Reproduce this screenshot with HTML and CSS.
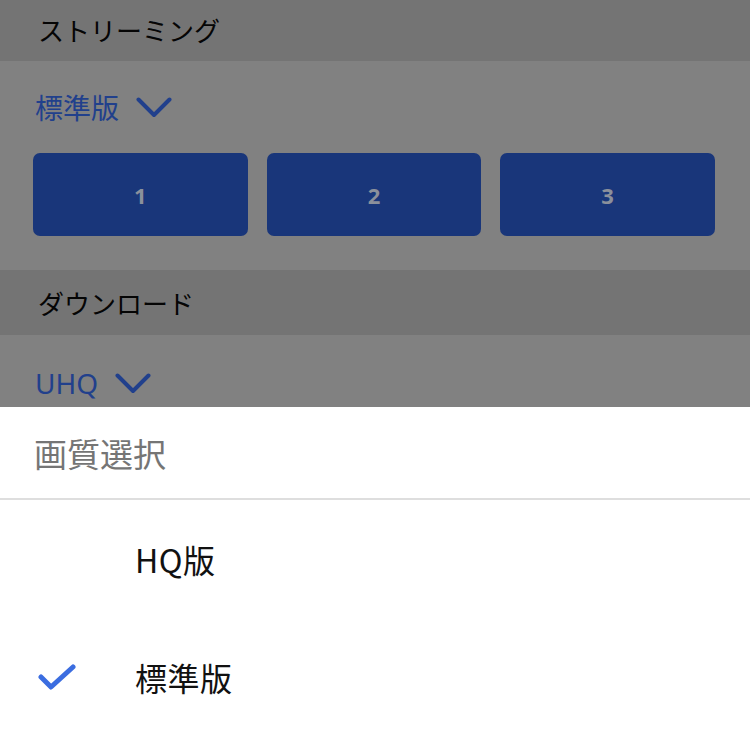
FILE: index.html
```html
<!DOCTYPE html>
<html lang="ja">
<head>
<meta charset="utf-8">
<link rel="stylesheet" href="styles.css">
</head>
<body>
<div class="page">
  <div class="section-head first">ストリーミング</div>
  <div class="section-body">
    <div class="select">
      <span class="select-label">標準版</span>
      <svg class="chevron" width="36" height="22" viewBox="0 0 36 22"><polyline points="2.5,2.5 18,18 33.5,2.5" fill="none" stroke="currentColor" stroke-width="4" stroke-linecap="round" stroke-linejoin="round"/></svg>
    </div>
    <div class="buttons">
      <div class="num-btn">1</div>
      <div class="num-btn">2</div>
      <div class="num-btn">3</div>
    </div>
  </div>
  <div class="section-head second">ダウンロード</div>
  <div class="section-body last">
    <div class="select">
      <span class="select-label latin">UHQ</span>
      <svg class="chevron" width="36" height="22" viewBox="0 0 36 22"><polyline points="2.5,2.5 18,18 33.5,2.5" fill="none" stroke="currentColor" stroke-width="4" stroke-linecap="round" stroke-linejoin="round"/></svg>
    </div>
  </div>
</div>
<div class="sheet">
  <div class="sheet-title">画質選択</div>
  <div class="option">
    <span class="check-col"></span>
    <span class="option-label">HQ版</span>
  </div>
  <div class="option">
    <span class="check-col">
      <svg width="40" height="30" viewBox="0 0 40 30"><polyline points="3,15 13,25 35,5" fill="none" stroke="#3b6de0" stroke-width="5" stroke-linecap="round" stroke-linejoin="round"/></svg>
    </span>
    <span class="option-label">標準版</span>
  </div>
</div>
</body>
</html>
```
FILE: styles.css
```css
* { box-sizing: border-box; }
html, body { margin: 0; padding: 0; }
body {
  width: 750px;
  height: 734px;
  overflow: hidden;
  background: #818181;
  font-family: "Noto Sans CJK JP", "Noto Sans", sans-serif;
}
.page { display: flex; flex-direction: column; }
.section-head {
  background: #747474;
  color: #050505;
  font-size: 26px;
  padding-left: 38px;
  display: flex;
  align-items: center;
}
.section-head.first { height: 61px; padding-bottom: 3px; }
.section-head.second { height: 65px; }
.section-body {
  background: #818181;
  padding: 22px 35px 34px 33px;
  display: flex;
  flex-direction: column;
  gap: 22px;
}
.section-body.last { padding-top: 24px; }
.select {
  height: 48px;
  display: flex;
  align-items: center;
  gap: 17px;
  padding-left: 2px;
  color: #21408c;
}
.select-label { font-size: 28px; line-height: 1; }
.select-label.latin { font-family: "Noto Sans", sans-serif; font-size: 28px; }
.chevron { display: block; margin-top: 2px; }
.buttons {
  display: grid;
  grid-template-columns: 1fr 1fr 1fr;
  gap: 19px;
}
.num-btn {
  height: 83px;
  background: #19367a;
  border-radius: 7px;
  display: flex;
  align-items: center;
  justify-content: center;
  color: #8b909b;
  font-family: "Noto Sans", sans-serif;
  font-weight: 700;
  font-size: 22px;
}
.sheet {
  position: fixed;
  left: 0;
  right: 0;
  bottom: 0;
  height: 327px;
  background: #ffffff;
  display: flex;
  flex-direction: column;
}
.sheet-title {
  height: 93px;
  border-bottom: 2px solid #dedede;
  display: flex;
  align-items: center;
  padding-left: 34px;
  font-size: 33px;
  color: #757575;
}
.option {
  height: 117px;
  display: flex;
  align-items: center;
  color: #111;
  font-size: 32px;
}
.option + .option { padding-top: 3px; }
.check-col {
  width: 135px;
  padding-left: 38px;
  display: flex;
  align-items: center;
}
.check-col svg { display: block; }
.option-label { line-height: 1; letter-spacing: 0.5px; }
```
